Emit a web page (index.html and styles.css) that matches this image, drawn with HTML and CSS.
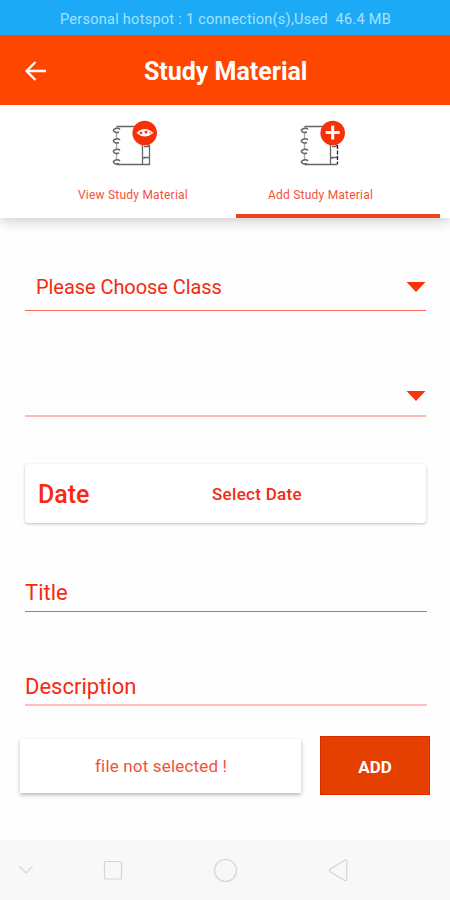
FILE: index.html
```html
<!DOCTYPE html>
<html lang="en">
<head>
<meta charset="utf-8">
<title>Study Material</title>
<link rel="stylesheet" href="styles.css">
</head>
<body>
<div class="status"><span>Personal hotspot : 1 connection(s),Used&nbsp; 46.4 MB</span></div>
<header class="appbar">
  <svg class="back" width="24" height="24" viewBox="0 0 24 24"><path d="M22 12H3M11.500 3L2.500 12l9 9"/></svg>
  <h1>Study Material</h1>
</header>
<nav class="tabs">
  <div class="tab view">
    <svg class="book" width="50" height="50" viewBox="0 0 50 50">
      <path class="ink" d="M8.500 6.500H29M8.500 44.500H41.500V25M34.500 24V44.500M36 26.500h4l1-2M36 39v-1.500h5"/>
      <path class="spine" d="M8.500 7V44"/>
      <g class="rings"><path d="M12 9.500a3.500 2 0 1 0-1 2.500M12 20a3.500 2 0 1 0-1 2.500M12 30.500a3.500 2 0 1 0-1 2.500M12 41a3.500 2 0 1 0-1 2.500"/></g>
      <circle class="badge" cx="36.700" cy="13" r="12.300"/>
      <path class="eye" d="M28.500 13Q36.500 5 45.500 13Q36.500 20 28.500 13Z"/>
      <circle class="badge" cx="38" cy="12" r="1.500"/><circle class="badge" cx="33" cy="13" r="1.300"/><circle class="badge" cx="42.200" cy="13" r=".8"/>
    </svg>
    <span>View Study Material</span>
  </div>
  <div class="tab add">
    <svg class="book" width="50" height="50" viewBox="0 0 50 50">
      <path class="ink" d="M8.500 6.500H29M8.500 44.500H41.500M34.500 24V44.500M36 26.500h4l1-2M36 39v-1.500h5"/>
      <path class="ink dash" d="M41.500 25V44"/>
      <path class="spine" d="M8.500 7V44"/>
      <g class="rings"><path d="M12 9.500a3.500 2 0 1 0-1 2.500M12 20a3.500 2 0 1 0-1 2.500M12 30.500a3.500 2 0 1 0-1 2.500M12 41a3.500 2 0 1 0-1 2.500"/></g>
      <circle class="badge" cx="36.700" cy="13" r="12.300"/>
      <path class="plus" d="M29.700 12.500h14M36.700 5.500v14"/>
    </svg>
    <span>Add Study Material</span>
  </div>
</nav>
<main>
  <div class="select first"><span>Please Choose Class</span><svg width="20" height="10" viewBox="0 0 20 10"><path d="M.5 0h19L10 10z"/></svg></div>
  <div class="select second"><svg width="20" height="10" viewBox="0 0 20 10"><path d="M.5 0h19L10 10z"/></svg></div>
  <div class="date"><strong>Date</strong><b>Select Date</b></div>
  <div class="field title"><span>Title</span></div>
  <div class="field desc"><span>Description</span></div>
  <div class="actions">
    <div class="file"><span>file not selected !</span></div>
    <button><span>ADD</span></button>
  </div>
</main>
<footer class="softkeys">
  <svg width="16" height="24" viewBox="0 0 16 24"><path d="M1.500 8.500L8 15l6.500-6.500"/></svg>
  <svg width="20" height="24" viewBox="0 0 20 24"><rect x="1.500" y="3.500" width="17" height="17.500" rx="1"/></svg>
  <svg width="24" height="24" viewBox="0 0 24 24"><circle cx="11.500" cy="12.500" r="11"/></svg>
  <svg width="20" height="24" viewBox="0 0 20 24"><path d="M17.800 3.500V20.500Q17.800 23.500 15.300 22.200L1.500 14Q-.5 12.500 1.500 11L15.300 2.500Q17.800 1 17.800 3.500Z"/></svg>
</footer>
</body>
</html>
```
FILE: styles.css
```css
* { box-sizing: border-box; }
body { margin: 0; width: 450px; height: 900px; display: flex; flex-direction: column; overflow: hidden; background: #fefefe; color: #f52a10; font-family: Roboto, sans-serif; }
svg { display: block; flex: none; fill: none; overflow: visible; }
span, b, strong { white-space: nowrap; }
.status { height: 35px; padding: 1px 0 0 60px; background: #1caaf6; color: #a5e2ff; font-size: 14.500px; line-height: 38px; letter-spacing: .27px; }
.appbar { height: 70px; padding: 2px 0 0 24px; display: flex; align-items: center; background: #ff4600; color: #fff; }
.back { stroke: #fff; stroke-width: 2.3; }
.appbar h1 { margin: 2px 0 0 96px; font-size: 25px; line-height: 30px; font-weight: 700; letter-spacing: -.02px; white-space: nowrap; }
.tabs { height: 113px; flex: none; display: flex; padding-left: 31px; background: #fff; box-shadow: 0 3px 12px rgba(0, 0, 0, .2); clip-path: inset(0 0 -20px 0); }
.tab { display: flex; flex-direction: column; font-size: 12px; letter-spacing: .22px; color: #f4513a; }
.tab span { margin-top: 17px; line-height: 16px; }
.view { width: 205px; padding: 15px 0 0 47px; }
.view .book { margin-left: 30px; }
.add { width: 204px; padding: 15px 0 0 32px; border-bottom: 4px solid #ed4420; }
.add .book { margin-left: 28px; }
.ink { stroke: #666; stroke-width: 1.3; }
.dash { stroke: #222; stroke-dasharray: 4 1.5; }
.spine { stroke: #aaa; stroke-width: 1.4; }
.rings { stroke: #666; stroke-width: 1.5; fill: #fff; }
.badge { fill: #f73008; }
.eye { fill: #fff; }
.plus { stroke: #fff; stroke-width: 3; }
main { height: 622px; flex: none; padding: 46px 19px 0 20px; }
.select { height: 47px; margin: 0 5px; padding: 0 0 0 11px; display: flex; align-items: center; border-bottom: 1px solid #fa695b; font-size: 20px; letter-spacing: -.06px; }
.select svg { margin-left: auto; fill: #fb3309; }
.second { margin-top: 59px; padding-top: 7px; border-bottom: 2px solid #ffb9b5; }
.date { height: 59px; margin: 47px 5px 0; padding-left: 13px; display: flex; align-items: center; border-radius: 3px; background: #fff; box-shadow: 0 1px 3px rgba(0, 0, 0, .25); }
.date strong { width: 174px; padding-top: 2px; font-size: 25px; font-weight: 500; }
.date b { font-size: 17px; font-weight: 500; letter-spacing: .3px; }
.field { height: 40px; margin: 49px 4px 0 5px; border-bottom: 1px solid #f75850; font-size: 22px; line-height: 42px; }
.desc { height: 42px; margin-top: 52px; border-bottom: 2px solid #ffbdc0; line-height: 46px; }
.actions { display: flex; gap: 19px; margin-top: 30px; }
.file { width: 281px; height: 54px; margin-top: 3px; padding-left: 75px; line-height: 54px; background: #fff; box-shadow: 0 2px 4px rgba(0, 0, 0, .28); font-size: 17px; letter-spacing: .17px; color: #f4513a; }
button { width: 110px; height: 59px; border: 1px solid #dc2b00; background: #e64000; color: #fff; font: 700 17px Roboto, sans-serif; padding: 2px 0 0; }
.softkeys { height: 60px; padding-left: 18px; display: flex; align-items: center; background: #f8f8f8; stroke: #d5d5d5; stroke-width: 1.2; }
.softkeys svg:nth-child(2) { margin-left: 69px; }
.softkeys svg:nth-child(3) { margin-left: 91px; }
.softkeys svg:nth-child(4) { margin-left: 91px; }
```
